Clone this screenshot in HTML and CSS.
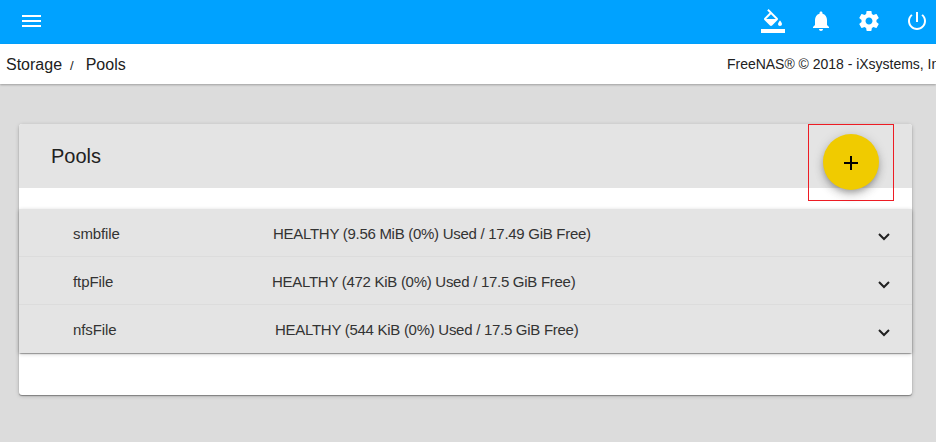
FILE: index.html
```html
<!DOCTYPE html>
<html lang="en">
<head>
<meta charset="utf-8">
<title>Pools</title>
<link rel="stylesheet" href="styles.css">
</head>
<body>
<header class="topbar">
  <svg class="icon" viewBox="0 0 24 24"><path d="M3 18h19v-2H3v2zm0-5h19v-2H3v2zm0-7v2h19V6H3z"/></svg>
  <nav class="actions">
    <svg class="icon" viewBox="0 0 24 24"><path d="M16.56 8.94L7.62 0 6.21 1.41l2.38 2.38-5.15 5.15c-.59.59-.59 1.54 0 2.12l5.5 5.5c.29.29.68.44 1.06.44s.77-.15 1.06-.44l5.5-5.5c.59-.58.59-1.53 0-2.12zM5.21 10L10 5.21 14.79 10H5.21zM19 11.5s-2 2.17-2 3.5c0 1.1.9 2 2 2s2-.9 2-2c0-1.33-2-3.5-2-3.5zM0 20h24v4H0z"/></svg>
    <svg class="icon" viewBox="0 0 24 24"><path d="M12 22c1.1 0 2-.9 2-2h-4c0 1.1.89 2 2 2zm6-6v-5c0-3.07-1.64-5.64-4.5-6.32V4c0-.83-.67-1.5-1.5-1.5s-1.5.67-1.5 1.5v.68C7.63 5.36 6 7.92 6 11v5l-2 2v1h16v-1l-2-2z"/></svg>
    <svg class="icon" viewBox="0 0 24 24"><path d="M19.43 12.98c.04-.32.07-.64.07-.98s-.03-.66-.07-.98l2.11-1.65c.19-.15.24-.42.12-.64l-2-3.46c-.12-.22-.39-.3-.61-.22l-2.49 1c-.52-.4-1.08-.73-1.69-.98l-.38-2.65C14.46 2.18 14.25 2 14 2h-4c-.25 0-.46.18-.49.42l-.38 2.65c-.61.25-1.17.59-1.69.98l-2.49-1c-.23-.09-.49 0-.61.22l-2 3.46c-.13.22-.07.49.12.64l2.11 1.65c-.04.32-.07.65-.07.98s.03.66.07.98l-2.11 1.65c-.19.15-.24.42-.12.64l2 3.46c.12.22.39.3.61.22l2.49-1c.52.4 1.08.73 1.69.98l.38 2.65c.03.24.24.42.49.42h4c.25 0 .46-.18.49-.42l.38-2.65c.61-.25 1.17-.59 1.69-.98l2.49 1c.23.09.49 0 .61-.22l2-3.46c.12-.22.07-.49-.12-.64l-2.11-1.65zM12 15.5c-1.93 0-3.5-1.57-3.5-3.5s1.57-3.5 3.5-3.5 3.5 1.57 3.5 3.5-1.57 3.5-3.5 3.5z"/></svg>
    <svg class="icon" viewBox="0 0 24 24"><path d="M13 3h-2v10h2V3zm4.83 2.17l-1.42 1.42C17.99 7.86 19 9.81 19 12c0 3.87-3.13 7-7 7s-7-3.13-7-7c0-2.19 1.01-4.14 2.58-5.42L6.17 5.17C4.23 6.82 3 9.26 3 12c0 4.97 4.03 9 9 9s9-4.03 9-9c0-2.74-1.23-5.18-3.17-6.83z"/></svg>
  </nav>
</header>
<div class="crumbbar">
  <div class="crumbs"><span>Storage</span><span class="slash">/</span><span>Pools</span></div>
  <div class="copyright">FreeNAS® © 2018 - iXsystems, Inc.</div>
</div>
<main class="card">
  <div class="card-head">
    <h1>Pools</h1>
    <div class="highlight">
      <button class="fab" aria-label="Add"><svg class="plus" viewBox="0 0 24 24"><path d="M19 13h-6v6h-2v-6H5v-2h6V5h2v6h6v2z"/></svg></button>
    </div>
  </div>
  <div class="pools">
    <div class="pool"><span class="name">smbfile</span><span class="status first">HEALTHY (9.56 MiB (0%) Used / 17.49 GiB Free)</span><svg class="chevron" viewBox="0 0 12 8"><path d="M1 1l5 5 5-5"/></svg></div>
    <div class="pool"><span class="name">ftpFile</span><span class="status">HEALTHY (472 KiB (0%) Used / 17.5 GiB Free)</span><svg class="chevron" viewBox="0 0 12 8"><path d="M1 1l5 5 5-5"/></svg></div>
    <div class="pool"><span class="name">nfsFile</span><span class="status last">HEALTHY (544 KiB (0%) Used / 17.5 GiB Free)</span><svg class="chevron" viewBox="0 0 12 8"><path d="M1 1l5 5 5-5"/></svg></div>
  </div>
</main>
</body>
</html>
```
FILE: styles.css
```css
* { box-sizing: border-box; }
body {
  margin: 0;
  height: 442px;
  overflow: hidden;
  background: #dcdcdc;
  color: #212121;
  font-family: "Liberation Sans", Arial, sans-serif;
}
.topbar {
  display: flex;
  justify-content: space-between;
  height: 44px;
  padding: 9px 7px 0 19px;
  background: #00a2ff;
}
.icon { display: block; width: 24px; height: 24px; fill: #fff; }
.actions { display: flex; gap: 24px; }
.crumbbar {
  display: flex;
  align-items: center;
  height: 40px;
  padding-left: 6px;
  background: #fff;
  box-shadow: 0 1px 2px rgba(0, 0, 0, .28);
}
.crumbs { display: flex; flex: none; align-items: baseline; width: 721px; padding-top: 2px; font-size: 16px; }
.slash { margin: 0 12px 0 8px; font-size: 13px; }
.copyright { flex: none; font-size: 14px; letter-spacing: -.02px; white-space: nowrap; }
.card {
  width: 893px;
  height: 271px;
  margin: 40px 0 0 19px;
  border-radius: 3px;
  background: #fff;
  box-shadow: 0 1px 1px rgba(0, 0, 0, .35), 0 1px 4px rgba(0, 0, 0, .2);
}
.card-head {
  display: flex;
  justify-content: space-between;
  height: 64px;
  padding: 0 18px 0 32px;
  border-radius: 3px 3px 0 0;
  background: #e4e4e4;
}
h1 { margin: 0; font-size: 20px; font-weight: 400; line-height: 64px; }
.highlight {
  position: relative;
  width: 86px;
  height: 77px;
  padding: 9px 14px;
  border: 1px solid #ed1c24;
}
.fab {
  display: grid;
  place-items: center;
  width: 56px;
  height: 56px;
  padding: 2px 0 0;
  border: 0;
  border-radius: 50%;
  background: #f0cb00;
  box-shadow: 0 3px 5px -1px rgba(0, 0, 0, .2), 0 6px 10px rgba(0, 0, 0, .14), 0 1px 12px rgba(0, 0, 0, .12);
}
.plus { width: 24px; height: 24px; }
.pools {
  margin-top: 21px;
  border-radius: 2px;
  box-shadow: 0 1px 1px rgba(0, 0, 0, .35), 0 1px 4px rgba(0, 0, 0, .2);
}
.pool {
  display: flex;
  align-items: center;
  height: 48px;
  padding: 2px 22px 0 54px;
  border-bottom: 1px solid #dcdcdc;
  background: #e4e4e4;
  color: #333;
  font-size: 15px;
  letter-spacing: -.28px;
}
.pool:last-child { border-bottom-color: #e4e4e4; }
.name { width: 199px; letter-spacing: -.1px; }
.status { flex: 1; }
.first { padding-left: 1px; }
.last { padding-left: 3px; }
.chevron { width: 12px; height: 8px; margin-top: 7px; fill: none; stroke: #212121; stroke-width: 2; }
```
